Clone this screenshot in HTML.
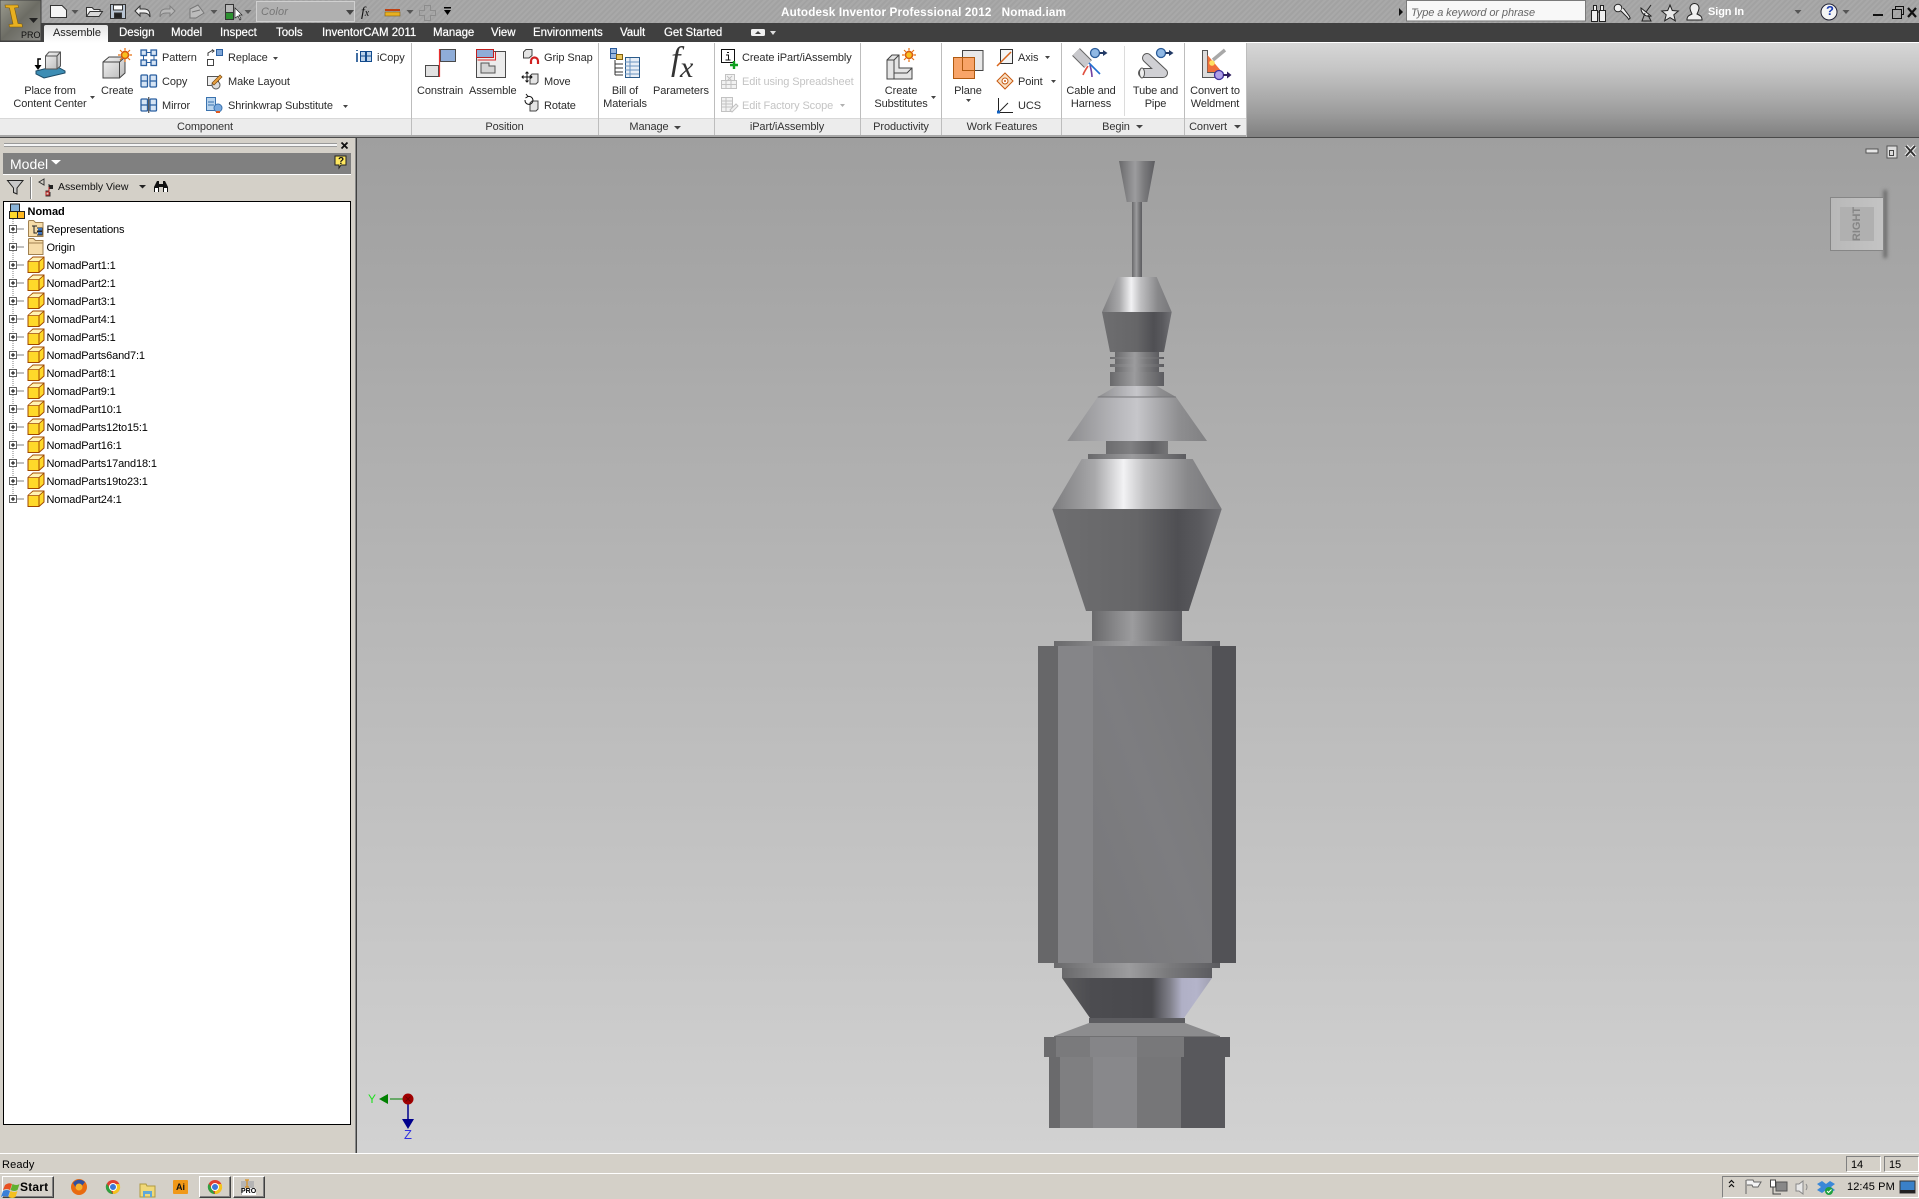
<!DOCTYPE html>
<html><head><meta charset="utf-8"><title>Autodesk Inventor Professional 2012</title>
<style>
html,body{margin:0;padding:0;width:1919px;height:1199px;overflow:hidden;background:#d4d0c8}
div,span{position:absolute}
.t{font:11px/14px "Liberation Sans",sans-serif;white-space:pre;color:#2c2c2c;letter-spacing:-.1px;margin-top:1px}
.c{transform:translateX(-50%)}
.tab{color:#fff;top:25px;font-size:11.5px;letter-spacing:-.05px;text-shadow:0 0 .6px #fff}
.g{color:#c4c4c4}
.lab{top:119px;color:#333}
.tr{color:#000;left:46.5px;font-size:11px;letter-spacing:-.15px}
svg{position:absolute;left:0;top:0}
</style></head><body>

<!-- title bar -->
<div style="left:0;top:0;width:1919px;height:23px;background:repeating-linear-gradient(135deg,#a9a9a9 0 2px,#a2a2a2 2px 4px)"></div>
<!-- tab bar -->
<div style="left:0;top:23px;width:1919px;height:19px;background:#404040"></div>
<!-- ribbon -->
<div style="left:0;top:42px;width:1919px;height:95px;background:linear-gradient(#d8d8d8 0,#c4c4c4 30%,#9c9c9c 75%,#808080 100%)"></div>
<div style="left:0;top:42px;width:1919px;height:1px;background:#fff"></div>
<div style="left:0;top:43px;width:1247px;height:94px;background:#fff"></div>
<div style="left:0;top:118px;width:1247px;height:17px;background:#ececec;border-top:1px solid #d8d8d8;box-sizing:border-box"></div>
<div style="left:0;top:135px;width:1247px;height:2px;background:#a8a8a8"></div>
<div style="left:0;top:137px;width:1919px;height:1px;background:#4a4a4a"></div>
<!-- separators -->
<div style="left:411px;top:43px;width:1px;height:92px;background:#bdbdbd"></div>
<div style="left:598px;top:43px;width:1px;height:92px;background:#bdbdbd"></div>
<div style="left:714px;top:43px;width:1px;height:92px;background:#bdbdbd"></div>
<div style="left:860px;top:43px;width:1px;height:92px;background:#bdbdbd"></div>
<div style="left:941px;top:43px;width:1px;height:92px;background:#bdbdbd"></div>
<div style="left:1061px;top:43px;width:1px;height:92px;background:#bdbdbd"></div>
<div style="left:1184px;top:43px;width:1px;height:92px;background:#bdbdbd"></div>
<div style="left:1124px;top:46px;width:1px;height:70px;background:#dcdcdc"></div>
<div style="left:1246px;top:43px;width:1px;height:94px;background:#bdbdbd"></div>

<!-- active tab -->
<div style="left:44px;top:25px;width:64px;height:18px;background:linear-gradient(#e4e4e4,#fff);border-radius:2px 2px 0 0"></div>

<!-- viewport -->
<div style="left:357px;top:138px;width:1562px;height:1015px;background:linear-gradient(#9f9f9f,#d2d2d2)"></div>

<!-- left panel -->
<div style="left:0;top:138px;width:355px;height:1015px;background:#d4d0c8"></div>
<div style="left:355px;top:138px;width:1px;height:1015px;background:#8a8a8a"></div>
<div style="left:356px;top:138px;width:1px;height:1015px;background:#404040"></div>
<div style="left:4px;top:143px;width:333px;height:1px;background:#9a9a9a"></div>
<div style="left:4px;top:144px;width:333px;height:2px;background:#f4f4f4"></div>
<div style="left:4px;top:146px;width:333px;height:1px;background:#9a9a9a"></div>
<div style="left:3px;top:153px;width:348px;height:21px;background:#808080"></div>
<div style="left:3px;top:174px;width:348px;height:1px;background:#fff"></div>
<div style="left:3px;top:201px;width:348px;height:924px;background:#fff;border:1px solid #000;box-sizing:border-box"></div>

<!-- status + taskbar -->
<div style="left:0;top:1153px;width:1919px;height:1px;background:#fff"></div>
<div style="left:0;top:1154px;width:1919px;height:19px;background:#d4d0c8"></div>
<div style="left:0;top:1173px;width:1919px;height:1px;background:#fff"></div>
<div style="left:0;top:1174px;width:1919px;height:25px;background:#d4d0c8"></div>
<div style="left:1846px;top:1156px;width:35px;height:16px;box-sizing:border-box;border:1px solid;border-color:#808080 #fff #fff #808080"></div>
<div style="left:1884px;top:1156px;width:35px;height:16px;box-sizing:border-box;border:1px solid;border-color:#808080 #fff #fff #808080"></div>
<div style="left:2px;top:1176px;width:52px;height:22px;box-sizing:border-box;border:1px solid;border-color:#fff #404040 #404040 #fff;box-shadow:inset -1px -1px 0 #808080"></div>
<div style="left:199px;top:1176px;width:32px;height:22px;box-sizing:border-box;border:1px solid;border-color:#fff #404040 #404040 #fff;box-shadow:inset -1px -1px 0 #808080"></div>
<div style="left:233px;top:1176px;width:32px;height:22px;box-sizing:border-box;border:1px solid;border-color:#fff #404040 #404040 #fff;box-shadow:inset -1px -1px 0 #808080"></div>
<div style="left:1722px;top:1176px;width:197px;height:22px;box-sizing:border-box;border:1px solid;border-color:#808080 #fff #fff #808080"></div>

<!-- assembly + icons -->
<svg width="1919" height="1199" viewBox="0 0 1919 1199" xmlns="http://www.w3.org/2000/svg">
<defs>
<linearGradient id="cy"><stop offset="0" stop-color="#69696b"/><stop offset=".3" stop-color="#8c8c8e"/><stop offset=".45" stop-color="#9c9c9e"/><stop offset=".7" stop-color="#7a7a7c"/><stop offset="1" stop-color="#5c5c60"/></linearGradient>
<linearGradient id="br"><stop offset="0" stop-color="#7c7c7e"/><stop offset=".25" stop-color="#a8a8aa"/><stop offset=".42" stop-color="#f2f2f4"/><stop offset=".55" stop-color="#c0c0c2"/><stop offset=".8" stop-color="#88888a"/><stop offset="1" stop-color="#77777a"/></linearGradient>
<linearGradient id="dk"><stop offset="0" stop-color="#6e6e70"/><stop offset=".5" stop-color="#666668"/><stop offset=".74" stop-color="#4f4f53"/><stop offset=".87" stop-color="#5a5a5e"/><stop offset="1" stop-color="#707074"/></linearGradient>
<linearGradient id="di"><stop offset="0" stop-color="#8c8c8e"/><stop offset=".4" stop-color="#bcbcc0"/><stop offset=".5" stop-color="#c6c6ca"/><stop offset=".8" stop-color="#8e8e90"/><stop offset="1" stop-color="#808082"/></linearGradient>
<linearGradient id="inv"><stop offset="0" stop-color="#5a5a5c"/><stop offset=".2" stop-color="#4c4c50"/><stop offset=".6" stop-color="#48484c"/><stop offset=".72" stop-color="#80808a"/><stop offset=".8" stop-color="#b0b0c6"/><stop offset=".9" stop-color="#b4b4ca"/><stop offset="1" stop-color="#a0a0b0"/></linearGradient>
<linearGradient id="tc"><stop offset="0" stop-color="#6c6c6e"/><stop offset=".4" stop-color="#808082"/><stop offset=".75" stop-color="#616164"/><stop offset="1" stop-color="#747476"/></linearGradient>
<linearGradient id="fa" x1="0" y1="1" x2="1" y2="0"><stop offset="0" stop-color="#78787b"/><stop offset=".5" stop-color="#7d7d80"/><stop offset="1" stop-color="#777779"/></linearGradient>
<linearGradient id="cub" x1="0" y1="0" x2="1" y2="1"><stop offset="0" stop-color="#f4f4f4"/><stop offset="1" stop-color="#b8b8b8"/></linearGradient>
<linearGradient id="vc"><stop offset="0" stop-color="#b8b8b8"/><stop offset="1" stop-color="#c4c4c4"/></linearGradient>
<filter id="bl" x="-200%" y="-20%" width="500%" height="140%"><feGaussianBlur stdDeviation="1.800"/></filter>
<linearGradient id="gold" x1="0" y1="0" x2="1" y2="1"><stop offset="0" stop-color="#ffe868"/><stop offset="1" stop-color="#f4b800"/></linearGradient>
<linearGradient id="logo" x1="0" y1="0" x2="1" y2="1"><stop offset="0" stop-color="#9c9c90"/><stop offset=".5" stop-color="#6c6c64"/><stop offset="1" stop-color="#8c8c88"/></linearGradient>
<g id="part"><path d="M-12.500 -3.500 L-7.500 -8 H3.500 V3 L-1.500 7.500 H-12.500 Z" fill="#ffd92a" stroke="#a04800" stroke-width="1"/><path d="M-12.500 -3.500 H-1.500 V7.500 M-1.500 -3.500 L3.500 -8" fill="none" stroke="#a04800"/><path d="M-12 -3.700 L-7.300 -7.500 H2.500 L-1.800 -3.700 Z" fill="#fff3b4"/></g>
<g id="ex"><rect x="9.500" y="-3.500" width="7" height="7" fill="#fff" stroke="#606060"/><path d="M11 0H15M13 -2V2" stroke="#000"/><path d="M17 0H24" stroke="#808080"/></g>
<g id="star"><circle r="3.500" fill="#f8c020" stroke="#d85a10" stroke-width="1.500"/><path d="M0-7V-4.500M0 7V4.500M-7 0H-4.500M7 0H4.500M-5-5L-3-3M5 5L3 3M-5 5L-3 3M5-5L3-3" stroke="#e87010" stroke-width="1.200"/></g>
<g id="dart"><path d="M-3.500 -2H3.500L0 2Z" fill="#555"/></g>
<g id="blu"><circle cx="0" cy="0" r="4.500" fill="#8fb8e4" stroke="#2a5c9a" stroke-width="1.300"/><path d="M4.500 0H9" stroke="#223a66" stroke-width="2"/><path d="M8 -3L12.500 0L8 3Z" fill="#223a66"/></g>
</defs>

<!-- ASSEMBLY -->
<polygon points="1119,161 1155,161 1147.300,202 1126.700,202" fill="url(#cy)"/>
<rect x="1132" y="202" width="10" height="75" fill="url(#cy)"/>
<polygon points="1117.300,277 1156.700,277 1171.700,312 1102,312" fill="url(#br)"/>
<polygon points="1102,312 1171.700,312 1164,352 1110,352" fill="url(#dk)"/>
<rect x="1115" y="352" width="44" height="6" fill="url(#cy)"/>
<rect x="1110" y="357" width="54" height="2" fill="url(#cy)"/>
<rect x="1115" y="359" width="44" height="5" fill="url(#cy)"/>
<rect x="1110" y="364" width="54" height="3" fill="url(#cy)"/>
<rect x="1115" y="367" width="44" height="5" fill="url(#cy)"/>
<rect x="1110" y="372" width="54" height="14" fill="url(#cy)"/>
<polygon points="1116.700,386 1156.700,386 1176,397 1097.700,397" fill="url(#di)"/>
<polygon points="1097.700,397 1176,397 1207,441 1067.300,441" fill="url(#di)"/>
<path d="M1097.700 397H1176" stroke="#77777a"/>
<rect x="1106" y="441" width="62" height="13" fill="url(#tc)"/>
<rect x="1088" y="454" width="98" height="5" fill="url(#cy)"/>
<polygon points="1081.700,459 1192.700,459 1221.700,509 1052.300,509" fill="url(#br)"/>
<polygon points="1052.300,509 1221.700,509 1188.700,611 1086,611" fill="url(#dk)"/>
<rect x="1092" y="611" width="90" height="30" fill="url(#cy)"/>
<rect x="1054" y="641" width="166" height="5" fill="url(#cy)"/>
<rect x="1038" y="646" width="20" height="317" fill="#676769"/>
<rect x="1058" y="646" width="35" height="317" fill="#858588"/>
<rect x="1093" y="646" width="119" height="317" fill="url(#fa)"/>
<rect x="1212" y="646" width="24" height="317" fill="#525256"/>
<rect x="1054" y="963" width="166" height="5" fill="url(#cy)"/>
<rect x="1062" y="968" width="150" height="10" fill="url(#cy)"/>
<polygon points="1062,978 1212,978 1184,1018 1090,1018" fill="url(#inv)"/>
<rect x="1089" y="1018" width="96" height="5" fill="#5c5c60"/>
<polygon points="1089,1023 1185,1023 1220,1036 1054,1036" fill="#8c8c8e"/>
<rect x="1054" y="1036" width="166" height="1" fill="#707072"/>
<rect x="1044" y="1037" width="12" height="20" fill="#6b6b6d"/>
<rect x="1056" y="1037" width="34" height="20" fill="#7a7a7c"/>
<rect x="1090" y="1037" width="47" height="20" fill="#858588"/>
<rect x="1137" y="1037" width="47" height="20" fill="#78787a"/>
<rect x="1184" y="1037" width="46" height="20" fill="#58585c"/>
<rect x="1049" y="1057" width="11" height="71" fill="#6a6a6c"/>
<rect x="1060" y="1057" width="33" height="71" fill="#7f7f81"/>
<rect x="1093" y="1057" width="44" height="71" fill="#88888b"/>
<rect x="1137" y="1057" width="44" height="71" fill="#767678"/>
<rect x="1181" y="1057" width="44" height="71" fill="#58585c"/>

<!-- axes -->
<path d="M390 1099H403" stroke="#008000"/>
<polygon points="379,1099 388,1094 388,1104" fill="#008000"/>
<path d="M408 1104V1120" stroke="#00008c" stroke-width="1.500"/>
<polygon points="402,1119 414,1119 408,1129" fill="#00008c"/>
<circle cx="408" cy="1099" r="5.500" fill="#a00000"/>
<path d="M405.500 1096.500l5 5m0-5l-5 5" stroke="#700000"/>

<!-- viewcube -->
<rect x="1883.500" y="190" width="3.500" height="68" fill="#666" filter="url(#bl)"/>
<rect x="1830.500" y="197.500" width="53" height="53" fill="url(#vc)" stroke="#868686"/>
<rect x="1840" y="207" width="34" height="34" fill="#b0b0b0"/>
<!-- viewport win controls -->
<rect x="1866" y="149" width="12" height="4" fill="#e6e6e6" stroke="#555" stroke-width="1"/>
<rect x="1887" y="146" width="10" height="12" fill="#ddd" stroke="#555"/><rect x="1889.500" y="150.500" width="4" height="5" fill="none" stroke="#444"/>
<path d="M1906 146l9 10m0-10l-9 10" stroke="#f0f0f0" stroke-width="4"/><path d="M1906 146l9 10m0-10l-9 10" stroke="#333" stroke-width="2"/>

<!-- LOGO -->
<rect x="0" y="0" width="41" height="41" fill="url(#logo)" stroke="#404040"/>
<path d="M5 5 H18 L18.500 7.500 L14.500 8 L18 23.500 L22 24 L22.500 27 L9.500 27 L9 24.500 L13 24 L9.500 8 L5.500 7.500 Z" fill="#e8b020" stroke="#7a5a10" stroke-width=".6"/>
<path d="M29 18h9l-4.500 5z" fill="#222"/>

<!-- QAT -->
<g stroke="#333" fill="#f4f4f4" stroke-width="1">
<path d="M50.500 5.500H62L66.500 10V17.500H50.500Z"/>
<path d="M86.500 16.500V7.500H92L94 9.500H100V11"/>
<path d="M86.500 16.500L90 11.500H102.500L99 16.500Z" fill="#d8d8d8"/>
<rect x="110.500" y="4.500" width="15" height="14" fill="#b8c4d2"/><rect x="113.500" y="5" width="9" height="5" fill="#fff"/><rect x="114.500" y="13" width="7" height="5" fill="#222"/>
</g>
<path d="M135 11l5-5v3h4c5 0 6 3 6 8c-1-3-3-4-6-4h-4v3z" fill="#f0f0f0" stroke="#333"/>
<path d="M175 11l-5-5v3h-4c-5 0-6 3-6 8c1-3 3-4 6-4h4v3z" fill="#b8b8b8" stroke="#808080"/>
<g stroke="#777" fill="#bcbcbc"><path d="M190 9L198 5L204 13L196 18H190Z"/><path d="M192 12l8-2" fill="none"/></g>
<rect x="225.500" y="4.500" width="8" height="8" fill="#b8b8b8" stroke="#333"/><rect x="225.500" y="12.500" width="8" height="7" fill="#2c9030" stroke="#333"/>
<path d="M235 8v10l3-2 2 4 1-1-2-4h3z" fill="#fff" stroke="#222" stroke-width=".7"/>
<use href="#dart" x="75" y="12"/><use href="#dart" x="214" y="12"/><use href="#dart" x="248" y="12"/>
<rect x="256.500" y="1.500" width="98" height="20" fill="#b0b0b0" stroke="#d0d0d0"/><path d="M346 10h8l-4 5z" fill="#444"/>
<rect x="385" y="9" width="15" height="2" fill="#c04010"/><rect x="385" y="12" width="15" height="4" fill="#e8b020" stroke="#80601a" stroke-width=".6"/>
<use href="#dart" x="410" y="12"/>
<path d="M424.500 5.500h6v5h5v5h-5v5h-6v-5h-5v-5h5z" fill="none" stroke="#8c8c8c"/>
<path d="M444 7h7v1.500h-7zM444 10h7l-3.500 5z" fill="#000"/>
<!-- right title icons -->
<path d="M1399 8l4 4-4 4z" fill="#111"/>
<rect x="1406.500" y=".5" width="179" height="20.500" fill="#f8f8f8" stroke="#7a7a7a"/>
<g stroke="#222" fill="#f0f0f0">
<rect x="1591.500" y="10.500" width="6" height="11"/><rect x="1599.500" y="10.500" width="6" height="11"/><rect x="1593.500" y="5.500" width="3" height="5"/><rect x="1600.500" y="5.500" width="3" height="5"/><path d="M1597.500 12h2" />
<circle cx="1618" cy="8" r="3.800"/><path d="M1620.500 10.500l7 7 1.200 2 1.500-1.500-1-2-6-8" />
<path d="M1641 8a8 8 0 0 0 10 8z"/><path d="M1645 13l-3 8h9l-3-6M1646 12l5-7" fill="none"/>
<path d="M1670 5l2.300 5.500 6 .5-4.500 3.800 1.500 6-5.300-3.200-5.300 3.200 1.500-6-4.500-3.800 6-.5z" fill="#e8e8e8"/>
<path d="M1692 14c-1-2-2-4-2-6a4.500 4.500 0 0 1 9 0c0 2-1 4-2 6 2 1 5 2 5 5v1h-15v-1c0-3 3-4 5-5z"/>
</g>
<use href="#dart" x="1798" y="12"/>
<circle cx="1829" cy="12" r="8" fill="#f4f4f4" stroke="#223"/>
<use href="#dart" x="1846" y="12"/>
<rect x="1873" y="14" width="10" height="2" fill="#111"/>
<rect x="1892.500" y="9.500" width="9" height="9" fill="none" stroke="#111"/><path d="M1895.500 9V6.500h8v8H1902" fill="none" stroke="#111"/>
<path d="M1908 8l8 9m0-9l-8 9" stroke="#111" stroke-width="2.200"/>
<!-- tab bar small icon -->
<rect x="751" y="29" width="14" height="7" rx="1.500" fill="#f0f0f0"/><path d="M755 34l3-3 3 3z" fill="#444"/>
<path d="M770 31h6l-3 4z" fill="#ddd"/>

<!-- RIBBON ICONS -->
<!-- Place from -->
<path d="M36 71L56 66L65 71V73L44 78L36 74Z" fill="#3d8db4" stroke="#1c4a66"/>
<path d="M45.500 56L49 52H60.500V66L57 69H45.500Z" fill="url(#cub)" stroke="#555"/>
<path d="M45.500 56H57V69M57 56L60.500 52" fill="none" stroke="#555"/>
<path d="M41 59h-3v7" fill="none" stroke="#000" stroke-width="1.500"/><path d="M34.500 65h7l-3.500 5z" fill="#000"/>
<!-- Create -->
<path d="M103 62L109 57H125V73L119.500 78H103Z" fill="url(#cub)" stroke="#444"/><path d="M103 62H119.500V78M119.500 62L125 57" fill="none" stroke="#444"/>
<use href="#star" x="125" y="55"/>
<!-- Pattern etc -->
<g fill="#d6e4f4" stroke="#2a5fa0" stroke-width="1.300">
<rect x="141" y="50" width="5.500" height="5.500"/><rect x="151" y="50" width="5.500" height="5.500"/><rect x="141" y="60" width="5.500" height="5.500"/><rect x="151" y="60" width="5.500" height="5.500"/>
<rect x="141" y="75" width="6.500" height="12" rx="1"/><rect x="150" y="75" width="6.500" height="12" rx="1"/><path d="M141 81h6.500M150 81h6.500" fill="none"/>
<rect x="141" y="99" width="6.500" height="12" rx="1"/><rect x="150" y="99" width="6.500" height="12" rx="1"/><path d="M141 105h6.500M150 105h6.500" fill="none"/>
</g>
<path d="M143.500 56v4M154 56v4M147 52.500h4M147 62.500h4" stroke="#2a5fa0" fill="none"/>
<path d="M148.700 97v16" stroke="#555" stroke-width="1.300"/>
<!-- Replace -->
<rect x="216.500" y="49.500" width="6" height="6" fill="#7ea6d8" stroke="#2a5fa0"/><rect x="207.500" y="59.500" width="6" height="6" fill="#fff" stroke="#444"/>
<path d="M208 56v-3l5-3M212 49.500l2 1.500-2 1.500" fill="none" stroke="#333"/>
<!-- Make layout -->
<rect x="207.500" y="76.500" width="11" height="9" fill="#eee" stroke="#555"/><circle cx="216" cy="85" r="4" fill="#ddd" stroke="#555"/><path d="M212 83l8-8 2 2-8 8z" fill="#e8a040" stroke="#7a4a10" stroke-width=".7"/>
<!-- Shrinkwrap -->
<rect x="206.500" y="97.500" width="9" height="13" fill="#b8d4ee" stroke="#3a72ae"/><path d="M208 102h6M208 105h6" stroke="#3a72ae"/><circle cx="218" cy="108" r="4" fill="#7aaade" stroke="#3a72ae"/><path d="M216 112l4 0" stroke="#e05a20" stroke-width="2"/>
<!-- iCopy -->
<path d="M357 50v1M357 53v9" stroke="#124a8c" stroke-width="1.600"/><rect x="360.500" y="51.500" width="5" height="10" fill="#bcd2ea" stroke="#124a8c"/><rect x="366.500" y="51.500" width="5" height="10" fill="#bcd2ea" stroke="#124a8c"/><path d="M360 56h12" stroke="#124a8c"/>
<!-- Constrain -->
<rect x="440.500" y="49.500" width="15" height="12" fill="#8fadd8" stroke="#4a4a4a"/>
<rect x="425.500" y="65.500" width="13" height="11" fill="#e2e2e2" stroke="#4a4a4a"/>
<path d="M439.500 49V77" stroke="#e83030" stroke-width="1.200"/>
<!-- Assemble -->
<rect x="476.500" y="51.500" width="29" height="26" fill="#ececec" stroke="#4a4a4a"/>
<path d="M481 63V73H495V66H489V63Z" fill="#d4d4d4" stroke="#555"/>
<rect x="476.500" y="49.500" width="17" height="8" fill="#8fadd8" stroke="#c02020"/><path d="M495.500 52v8h-18" fill="none" stroke="#d82828"/>
<!-- Grip Snap, Move, Rotate -->
<g fill="#e4e4e4" stroke="#444"><path d="M523.500 52L526 49.500H532V55.500L529 58H523.500Z"/>
<path d="M530 76L532 74H538V82L536 84H530Z"/><path d="M530 103L532 101H538V109L536 111H530Z"/></g>
<path d="M531 64v-3a3.500 3.500 0 0 1 7 0v3" fill="none" stroke="#d02020" stroke-width="2.200"/>
<path d="M527 72v10M522 77h10M525.500 73.500l1.500-1.500 1.500 1.500M525.500 80.500l1.500 1.500 1.500-1.500M523.500 75.500l-1.500 1.500 1.500 1.500M530.500 75.500l1.500 1.500-1.500 1.500" fill="none" stroke="#111"/>
<path d="M525 100a4 4 0 1 0 3-3.500M526 94l2 2.500-2.500 1.500" fill="none" stroke="#111"/>
<!-- BOM -->
<rect x="610.500" y="48.500" width="6" height="5" fill="#9ab8e0" stroke="#2a5a9a"/><rect x="610.500" y="53.500" width="6" height="5" fill="#9ab8e0" stroke="#2a5a9a"/><rect x="616.500" y="54.500" width="6" height="5" fill="#ecc860" stroke="#806010"/>
<path d="M615 60v15M615 64h8M615 68h8M615 72h8M615 75h8" fill="none" stroke="#333"/>
<rect x="625.500" y="57.500" width="14" height="20" fill="#e8eef6" stroke="#2a5a8a"/><path d="M625 62h14M625 66h14M625 70h14M625 74h14M630 58v19" stroke="#6a94c0" fill="none"/>
<!-- iPart -->
<rect x="721.500" y="49.500" width="13" height="13" fill="#fff" stroke="#111"/><path d="M727 52.500h2M726 55h2.500v5M725.500 60h5" stroke="#111" fill="none"/>
<path d="M734 61v8M730 65h8" stroke="#10a020" stroke-width="2.400"/>
<!-- Edit spreadsheet -->
<g fill="#f2f2f2" stroke="#c2c2c2"><rect x="725.500" y="74.500" width="9" height="8"/><rect x="721.500" y="80.500" width="15" height="8"/><path d="M721 84.500h15M726 81v8M731 81v8M727 76l5 5m0-5l-5 5" fill="none"/>
<rect x="721.500" y="97.500" width="11" height="14"/><path d="M722 101h10M722 104h10M722 107h10M726 98v13" fill="none"/><path d="M730 110l6-6 2 2-6 6z"/></g>
<!-- Create substitutes -->
<path d="M887 60L892 55H899V68H912V79H887Z" fill="#e4e4e4" stroke="#444"/><path d="M887 60H894V73H907L912 68M894 73V79" fill="none" stroke="#444"/>
<path d="M894 60L899 55" stroke="#444"/>
<use href="#star" x="909" y="55"/>
<!-- Plane -->
<rect x="962.500" y="50.500" width="20.500" height="20" fill="#e8e8e8" stroke="#444"/>
<rect x="953.500" y="57.500" width="21" height="21" fill="#f8a468" stroke="#b05a10"/>
<path d="M962.500 57.500V70.500H974" fill="none" stroke="#b05a10"/>
<!-- Axis Point UCS -->
<rect x="1000.500" y="49.500" width="12" height="14" fill="#f4f4f4" stroke="#333"/><path d="M997 66L1011 52" stroke="#d8641a" stroke-width="1.500"/>
<path d="M1005 73l8 8-8 8-8-8z" fill="#f8e0c4" stroke="#c85a10"/><circle cx="1005" cy="81" r="3" fill="#fff" stroke="#c85a10"/><circle cx="1005" cy="81" r="1" fill="#c85a10"/>
<path d="M998.500 98V112.500H1013M998.500 112.500L1008 103" fill="none" stroke="#222"/><rect x="997" y="110.500" width="3" height="3" fill="#1060c0"/>
<!-- Cable -->
<path d="M1076 52L1088 64" stroke="#666" stroke-width="11"/><path d="M1076 52L1088 64" stroke="#c8c8cc" stroke-width="9"/>
<path d="M1090 65C1091 69 1092 73 1092 77" fill="none" stroke="#7040a0" stroke-width="1.600"/><path d="M1088 66C1086 69 1084 72 1083 75" fill="none" stroke="#e05040" stroke-width="1.600"/><path d="M1089 63L1100 74" stroke="#2070d0" stroke-width="1.600"/>
<use href="#blu" x="1095" y="53"/>
<!-- Tube -->
<path d="M1143 73H1163L1147 58" fill="none" stroke="#555" stroke-width="10" stroke-linejoin="round" stroke-linecap="round"/>
<path d="M1143 73H1163L1147 58" fill="none" stroke="#d0d0d4" stroke-width="8" stroke-linejoin="round" stroke-linecap="round"/>
<ellipse cx="1142" cy="73" rx="2.500" ry="5" fill="#eee" stroke="#555"/>
<use href="#blu" x="1161" y="53"/>
<!-- Weldment -->
<path d="M1202.500 50.500V77.500H1223V72.500H1207.500V50.500Z" fill="#dcdcdc" stroke="#555"/>
<path d="M1207.500 55V72H1222Z" fill="#f0703a"/><circle cx="1212" cy="63" r="2.800" fill="#ffe060"/>
<path d="M1213 60L1225 50" stroke="#a8a8a8" stroke-width="3.500"/>
<circle cx="1219" cy="75" r="4.500" fill="#b0a0e8" stroke="#4030a0" stroke-width="1.300"/><path d="M1223 75h5" stroke="#302060" stroke-width="2"/><path d="M1227 71.500l4.500 3.500-4.500 3.500z" fill="#302060"/>
<!-- ribbon arrows -->
<g fill="#444"><path d="M90 96h5l-2.500 3z"/><path d="M273 57h5l-2.500 3z"/><path d="M343 105h5l-2.500 3z"/><path d="M931 96h5l-2.500 3z"/><path d="M966 99h5l-2.500 3z"/><path d="M1045 56h5l-2.500 3z"/><path d="M1051 80h5l-2.500 3z"/><path d="M674 126h7l-3.500 3.500z"/><path d="M1136 125h7l-3.500 3.500z"/><path d="M1234 125h7l-3.500 3.500z"/></g>
<path d="M840 104h5l-2.500 3z" fill="#b0b0b0"/>

<!-- Panel -->
<path d="M341.500 142.500l6 6m0-6l-6 6" stroke="#111" stroke-width="1.800"/>
<path d="M51 160h10l-5 4.500z" fill="#fff"/>
<path d="M335 156h11v9h-5l-2 3v-3h-4z" fill="#ffe860" stroke="#222"/>
<path d="M7.500 180.500H23L17 188V194L13.500 192.500V188Z" fill="#c8c8c8" stroke="#222"/>
<path d="M30.500 177v22" stroke="#808080"/><path d="M31.500 177v22" stroke="#fff"/>
<path d="M39 182l5-3v6zM49 184v7h-3v5h4v-4" fill="none" stroke="#333"/><rect x="49" y="185" width="4" height="4" fill="#222"/><rect x="46" y="192" width="3" height="3" fill="none" stroke="#c02020"/>
<path d="M49 187v7" stroke="#c02020"/>
<path d="M139 185h7l-3.500 3.500z" fill="#222"/>
<g fill="#111"><path d="M154 187L157 181H159V192H154Z"/><path d="M168 187L165 181H163V192H168Z"/><rect x="159" y="184" width="4" height="3"/></g>
<rect x="155" y="188" width="3" height="4" fill="#fff"/><rect x="164" y="188" width="3" height="4" fill="#fff"/>

<!-- tree lines -->
<path d="M13 219V499" stroke="#808080" stroke-dasharray="1 1"/>
<!-- root icon -->
<rect x="10.500" y="204" width="9" height="9" fill="#8ab4d8" stroke="#222"/><rect x="9.500" y="211.500" width="8" height="7" fill="#ffd92a" stroke="#222"/><rect x="17.500" y="211.500" width="7" height="7" fill="#ffb820" stroke="#222"/>
<!-- rows -->
<use href="#ex" x="0" y="229"/><use href="#ex" x="0" y="247"/><use href="#ex" x="0" y="265"/><use href="#ex" x="0" y="283"/><use href="#ex" x="0" y="301"/><use href="#ex" x="0" y="319"/><use href="#ex" x="0" y="337"/><use href="#ex" x="0" y="355"/><use href="#ex" x="0" y="373"/><use href="#ex" x="0" y="391"/><use href="#ex" x="0" y="409"/><use href="#ex" x="0" y="427"/><use href="#ex" x="0" y="445"/><use href="#ex" x="0" y="463"/><use href="#ex" x="0" y="481"/><use href="#ex" x="0" y="499"/>
<path d="M28.500 224v-2.500a1 1 0 0 1 1-1h4l2 2h7.500V236.500H28.500Z" fill="#f6dca8" stroke="#a08050"/>
<path d="M32 226h5M34 226v7h3M37 228h5v3h-5M37 232h5v3h-5" stroke="#222" fill="none"/><rect x="38" y="228" width="4" height="2.500" fill="#3a72c0"/><rect x="38" y="232" width="4" height="2.500" fill="#3a72c0"/>
<path d="M28.500 243v-3.500a1 1 0 0 1 1-1h4l2 2h7.500V254.500H28.500Z" fill="#f6dca8" stroke="#a08050"/><path d="M29 243H43" stroke="#a08050"/>
<use href="#part" x="40.500" y="265"/><use href="#part" x="40.500" y="283"/><use href="#part" x="40.500" y="301"/><use href="#part" x="40.500" y="319"/><use href="#part" x="40.500" y="337"/><use href="#part" x="40.500" y="355"/><use href="#part" x="40.500" y="373"/><use href="#part" x="40.500" y="391"/><use href="#part" x="40.500" y="409"/><use href="#part" x="40.500" y="427"/><use href="#part" x="40.500" y="445"/><use href="#part" x="40.500" y="463"/><use href="#part" x="40.500" y="481"/><use href="#part" x="40.500" y="499"/>

<!-- taskbar icons -->
<path d="M5 1185q4-3 7-1l-2 6q-3-2-7 0z" fill="#e85020"/><path d="M12.500 1184q4 2 7 0l-2 6q-3 2-7 0z" fill="#60b030"/><path d="M3 1191q4-2 7 0l-2 6q-3-2-7 0z" fill="#3a80d8"/><path d="M10.500 1191q4 2 7 0l-2 6q-3 2-7 0z" fill="#f4c020"/>
<circle cx="79" cy="1187" r="8" fill="#e86a10"/><path d="M73 1183a8 8 0 0 1 12-1l-4 5-5 1z" fill="#3050a0"/><circle cx="79" cy="1187" r="3.500" fill="#f4b030"/>
<g id="chrome"><circle cx="113" cy="1187" r="7" fill="#e04030"/><path d="M113 1194a7 7 0 0 1-6.200-10.500l3.500 6z" fill="#30a040"/><path d="M113 1194a7 7 0 0 0 6.500-10h-6.500z" fill="#f4c420"/><circle cx="113" cy="1187" r="3.500" fill="#3a78d8" stroke="#fff"/></g>
<use href="#chrome" x="102" y="0"/>
<path d="M140 1184h6l1 2h8v11h-15z" fill="#f0d878" stroke="#b09a40"/><path d="M143 1191h9v6h-2v-3h-5v3h-2z" fill="#60a8d8"/>
<rect x="173" y="1180" width="15" height="14" rx="1" fill="#f09818"/>
<rect x="241" y="1181" width="13" height="14" fill="#b4b4b4"/><rect x="242" y="1188" width="14" height="7" fill="#fff"/><path d="M245 1180h4M247 1180v7M245 1187h4" stroke="#d89020" stroke-width="1.200"/>
<!-- tray -->
<path d="M1729 1183l2.500-2.500 2.500 2.500M1729 1187l2.500-2.500 2.500 2.500" fill="none" stroke="#111" stroke-width="1.200"/>
<path d="M1746 1180V1194M1746.500 1180H1753L1754 1182H1761L1758 1187H1753L1752 1185H1747" fill="#f4f4f4" stroke="#666"/>
<rect x="1776" y="1182" width="11" height="9" fill="#888" stroke="#555"/><rect x="1770.500" y="1180" width="5" height="7" fill="#fff" stroke="#444"/><path d="M1773 1187v7h8" fill="none" stroke="#444"/>
<path d="M1796 1184h3l4-3v13l-4-3h-3z" fill="#e8e8e8" stroke="#888"/><path d="M1806 1184q2 3 0 6" fill="none" stroke="#888"/>
<path d="M1817 1184l5-3 4 3 4-3 5 3-4 3 4 3-5 3-4-3-4 3-5-3 4-3z" fill="#3a88d8"/><circle cx="1829" cy="1191" r="4" fill="#20a040"/><path d="M1827 1191l1.500 1.500 3-3" stroke="#fff" fill="none"/>
<rect x="1900" y="1181" width="15" height="12" fill="#3a80c8" stroke="#333"/><rect x="1900" y="1190" width="15" height="3" fill="#222"/>
</svg>

<!-- TEXT -->
<span class="t" style="left:781px;top:5px;color:#fff;font-size:11.7px;font-weight:bold;letter-spacing:.15px">Autodesk Inventor Professional 2012   Nomad.iam</span>
<span class="t" style="left:21px;top:27px;color:#111;font-size:9px;letter-spacing:0">PRO</span>
<span class="t" style="left:261px;top:4px;font-style:italic;color:#777;letter-spacing:.15px">Color</span>
<span class="t" style="left:361px;top:2px;font:italic 14px/20px 'Liberation Serif',serif;color:#111">f<span style="position:static;font-size:10px">x</span></span>
<span class="t" style="left:1411px;top:5px;font-style:italic;color:#666">Type a keyword or phrase</span>
<span class="t" style="left:1708px;top:4px;color:#fff;font-weight:bold;letter-spacing:-.1px">Sign In</span>
<span class="t" style="left:1826px;top:3px;color:#1c3cb0;font-weight:bold;font-size:13px">?</span>

<span class="t tab" style="left:53px;color:#222;font-size:11px;text-shadow:none">Assemble</span>
<span class="t tab" style="left:119px">Design</span>
<span class="t tab" style="left:171px">Model</span>
<span class="t tab" style="left:220px">Inspect</span>
<span class="t tab" style="left:276px">Tools</span>
<span class="t tab" style="left:322px">InventorCAM 2011</span>
<span class="t tab" style="left:433px">Manage</span>
<span class="t tab" style="left:491px">View</span>
<span class="t tab" style="left:533px">Environments</span>
<span class="t tab" style="left:620px">Vault</span>
<span class="t tab" style="left:664px">Get Started</span>

<span class="t c" style="left:50px;top:83px">Place from</span>
<span class="t c" style="left:50px;top:96px">Content Center</span>
<span class="t" style="left:101px;top:83px">Create</span>
<span class="t" style="left:162px;top:50px">Pattern</span>
<span class="t" style="left:162px;top:74px">Copy</span>
<span class="t" style="left:162px;top:98px">Mirror</span>
<span class="t" style="left:228px;top:50px">Replace</span>
<span class="t" style="left:228px;top:74px">Make Layout</span>
<span class="t" style="left:228px;top:98px">Shrinkwrap Substitute</span>
<span class="t" style="left:377px;top:50px">iCopy</span>
<span class="t" style="left:417px;top:83px">Constrain</span>
<span class="t" style="left:469px;top:83px">Assemble</span>
<span class="t" style="left:544px;top:50px">Grip Snap</span>
<span class="t" style="left:544px;top:74px">Move</span>
<span class="t" style="left:544px;top:98px">Rotate</span>
<span class="t c" style="left:625px;top:83px">Bill of</span>
<span class="t c" style="left:625px;top:96px">Materials</span>
<span class="t" style="left:653px;top:83px">Parameters</span>
<span class="t" style="left:671px;top:41px;font:italic 34px/36px 'Liberation Serif',serif;color:#333;letter-spacing:0">f</span>
<span class="t" style="left:680px;top:51px;font:italic 30px/32px 'Liberation Serif',serif;color:#333;letter-spacing:0">x</span>
<span class="t" style="left:742px;top:50px">Create iPart/iAssembly</span>
<span class="t g" style="left:742px;top:74px">Edit using Spreadsheet</span>
<span class="t g" style="left:742px;top:98px">Edit Factory Scope</span>
<span class="t c" style="left:901px;top:83px">Create</span>
<span class="t c" style="left:901px;top:96px">Substitutes</span>
<span class="t c" style="left:968px;top:83px">Plane</span>
<span class="t" style="left:1018px;top:50px">Axis</span>
<span class="t" style="left:1018px;top:74px">Point</span>
<span class="t" style="left:1018px;top:98px">UCS</span>
<span class="t c" style="left:1091px;top:83px">Cable and</span>
<span class="t c" style="left:1091px;top:96px">Harness</span>
<span class="t c" style="left:1155.500px;top:83px">Tube and</span>
<span class="t c" style="left:1155.500px;top:96px">Pipe</span>
<span class="t c" style="left:1215px;top:83px">Convert to</span>
<span class="t c" style="left:1215px;top:96px">Weldment</span>

<span class="t c lab" style="left:205px">Component</span>
<span class="t c lab" style="left:504.500px">Position</span>
<span class="t c lab" style="left:649px">Manage</span>
<span class="t c lab" style="left:787px">iPart/iAssembly</span>
<span class="t c lab" style="left:901px">Productivity</span>
<span class="t c lab" style="left:1002px">Work Features</span>
<span class="t c lab" style="left:1116px">Begin</span>
<span class="t c lab" style="left:1208px">Convert</span>

<span class="t" style="left:10px;top:155px;color:#fff;font-size:14px;line-height:16px;letter-spacing:0">Model</span>
<span class="t" style="left:338px;top:154px;color:#111;font-size:10px;font-weight:bold">?</span>
<span class="t" style="left:58px;top:179px;color:#111;font-size:10.500px;letter-spacing:-.05px">Assembly View</span>

<span class="t" style="left:27.500px;top:204px;color:#000;font-weight:bold;letter-spacing:0">Nomad</span>
<span class="t tr" style="top:222px">Representations</span>
<span class="t tr" style="top:240px">Origin</span>
<span class="t tr" style="top:258px">NomadPart1:1</span>
<span class="t tr" style="top:276px">NomadPart2:1</span>
<span class="t tr" style="top:294px">NomadPart3:1</span>
<span class="t tr" style="top:312px">NomadPart4:1</span>
<span class="t tr" style="top:330px">NomadPart5:1</span>
<span class="t tr" style="top:348px">NomadParts6and7:1</span>
<span class="t tr" style="top:366px">NomadPart8:1</span>
<span class="t tr" style="top:384px">NomadPart9:1</span>
<span class="t tr" style="top:402px">NomadPart10:1</span>
<span class="t tr" style="top:420px">NomadParts12to15:1</span>
<span class="t tr" style="top:438px">NomadPart16:1</span>
<span class="t tr" style="top:456px">NomadParts17and18:1</span>
<span class="t tr" style="top:474px">NomadParts19to23:1</span>
<span class="t tr" style="top:492px">NomadPart24:1</span>

<span style="left:1857px;top:223.500px;font:bold 11px/14px 'Liberation Sans',sans-serif;color:#868686;white-space:pre;transform:translate(-50%,-50%) rotate(-90deg)">RIGHT</span>

<span class="t" style="left:368px;top:1091px;color:#20e020;font-size:12px">Y</span>
<span class="t" style="left:404px;top:1127px;color:#3030e0;font-size:13px">Z</span>

<span class="t" style="left:2px;top:1157px;color:#000;font-size:11px;letter-spacing:.15px">Ready</span>
<span class="t" style="left:1851px;top:1157px;color:#000">14</span>
<span class="t" style="left:1889px;top:1157px;color:#000">15</span>
<span class="t" style="left:20px;top:1179px;color:#000;font-weight:bold;font-size:12px;letter-spacing:.2px">Start</span>
<span class="t" style="left:176px;top:1179px;color:#111;font-size:9px;font-weight:bold;letter-spacing:0">Ai</span>
<span class="t" style="left:241px;top:1187px;color:#000;font-size:7px;line-height:8px;font-weight:bold;letter-spacing:0">PRO</span>
<span class="t" style="left:1847px;top:1179px;color:#000;letter-spacing:.1px">12:45 PM</span>
</body></html>
